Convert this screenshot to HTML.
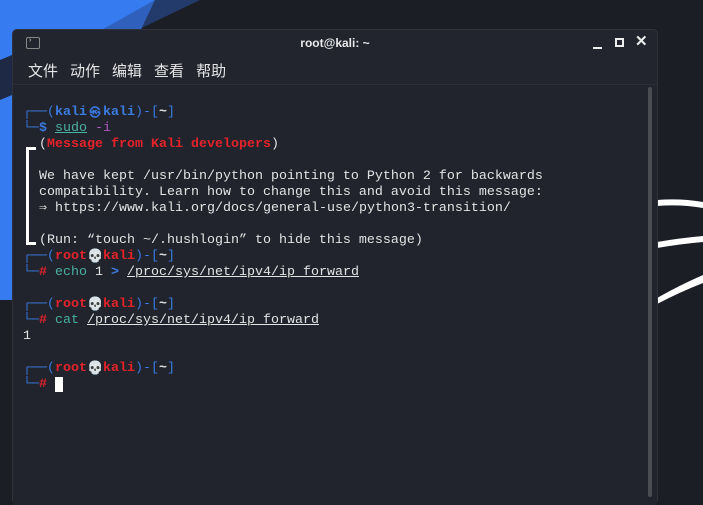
<!DOCTYPE html>
<html><head><meta charset="utf-8"><style>
html,body{margin:0;padding:0;width:703px;height:486px;overflow:hidden;background:#1b1e25;font-family:"Liberation Sans","Noto Sans CJK SC",sans-serif}
.win{position:absolute;left:12px;top:29px;width:644px;height:470px;background:#22252d;border-radius:5px 5px 0 0;border:1px solid #2e323b}
.title{position:absolute;left:0;top:0;width:100%;height:26px;color:#e8e8e8;font-size:12px;font-weight:bold;text-align:center;line-height:26px}
.menu{position:absolute;left:15px;top:30px;font-size:15px;color:#e6e6e6}
.menu span{margin-right:12px}
.term{position:absolute;left:0;top:54px;width:100%;height:420px;border-top:1px solid #2b2f37;background:#21242c}
.t{position:absolute;left:10px;top:20px;font-family:"Liberation Mono","DejaVu Sans Mono",monospace;font-size:13.33px;line-height:16px;color:#e3e3e3;white-space:pre}
.b{color:#3b7ae0}.r{color:#e3222a;font-weight:bold}.g{color:#49b0a2}.u{text-decoration:underline}.p{color:#b057c0}.bb{color:#3b7ae0;font-weight:bold}
.w{display:inline-block;width:16px;text-align:center;font-size:11px;line-height:12px;vertical-align:-1px}
.s{font-size:13px}
.sb{position:absolute;left:635px;top:2px;width:4px;height:410px;background:#4a4d54;border-radius:2px}
</style></head><body>
<svg width="703" height="486" style="position:absolute;left:0;top:0">
<polygon points="0,0 155,0 12,300 0,300" fill="#367bf0"/>
<polygon points="155,0 200,0 12,90 12,80" fill="#2a4f9a" opacity=".6"/>
<polygon points="0,60 12,55 12,95 0,100" fill="#1e2a45"/>
<path d="M657,200 Q680,198 703,202 L703,208 Q680,204 657,206Z" fill="#fff"/>
<path d="M657,242 Q680,238 703,236 L703,242 Q680,244 657,248Z" fill="#fff"/>
<path d="M657,298 Q680,285 703,275 L703,283 Q680,292 657,304Z" fill="#fff"/>
</svg>
<div class="win">
<div class="title">root@kali: ~</div>
<div style="position:absolute;left:13px;top:7px;width:12px;height:10px;border:1px solid #888;border-radius:2px;font-size:7px;color:#ddd;line-height:6px">&nbsp;›</div>
<div style="position:absolute;left:580px;top:17px;width:9px;height:2px;background:#eee"></div>
<div style="position:absolute;left:602px;top:8px;width:5px;height:5px;border:2px solid #eee"></div>
<div style="position:absolute;left:622px;top:2px;color:#eee;font-size:15px;font-weight:bold">✕</div>
<div class="menu"><span>文件</span><span>动作</span><span>编辑</span><span>查看</span><span>帮助</span></div>
<div class="term">
<div class="sb"></div>
<div style="position:absolute;left:13px;top:62px;width:3px;height:98px;background:#fff"></div>
<div style="position:absolute;left:13px;top:62px;width:10px;height:3px;background:#fff"></div>
<div style="position:absolute;left:13px;top:157px;width:10px;height:3px;background:#fff"></div>
<div class="t"><span class="b">┌──(</span><span class="bb">kali<span class="w">㉿</span>kali</span><span class="b">)-[</span><b>~</b><span class="b">]</span>
<span class="b">└─</span><span class="bb">$</span> <span class="g u">sudo</span> <span class="p">-i</span>
  (<span class="r">Message from Kali developers</span>)

  We have kept /usr/bin/python pointing to Python 2 for backwards
  compatibility. Learn how to change this and avoid this message:
  ⇒ https://www.kali.org/docs/general-use/python3-transition/

  (Run: “touch ~/.hushlogin” to hide this message)
<span class="b">┌──(</span><span class="r">root<span class="w s">💀</span>kali</span><span class="b">)-[</span><b>~</b><span class="b">]</span>
<span class="b">└─</span><span class="r">#</span> <span class="g">echo</span> 1 <span class="bb">&gt;</span> <span class="u">/proc/sys/net/ipv4/ip_forward</span>

<span class="b">┌──(</span><span class="r">root<span class="w s">💀</span>kali</span><span class="b">)-[</span><b>~</b><span class="b">]</span>
<span class="b">└─</span><span class="r">#</span> <span class="g">cat</span> <span class="u">/proc/sys/net/ipv4/ip_forward</span>
1

<span class="b">┌──(</span><span class="r">root<span class="w s">💀</span>kali</span><span class="b">)-[</span><b>~</b><span class="b">]</span>
<span class="b">└─</span><span class="r">#</span> <span style="background:#fff">&nbsp;</span></div>
</div>
</div>
</body></html>
